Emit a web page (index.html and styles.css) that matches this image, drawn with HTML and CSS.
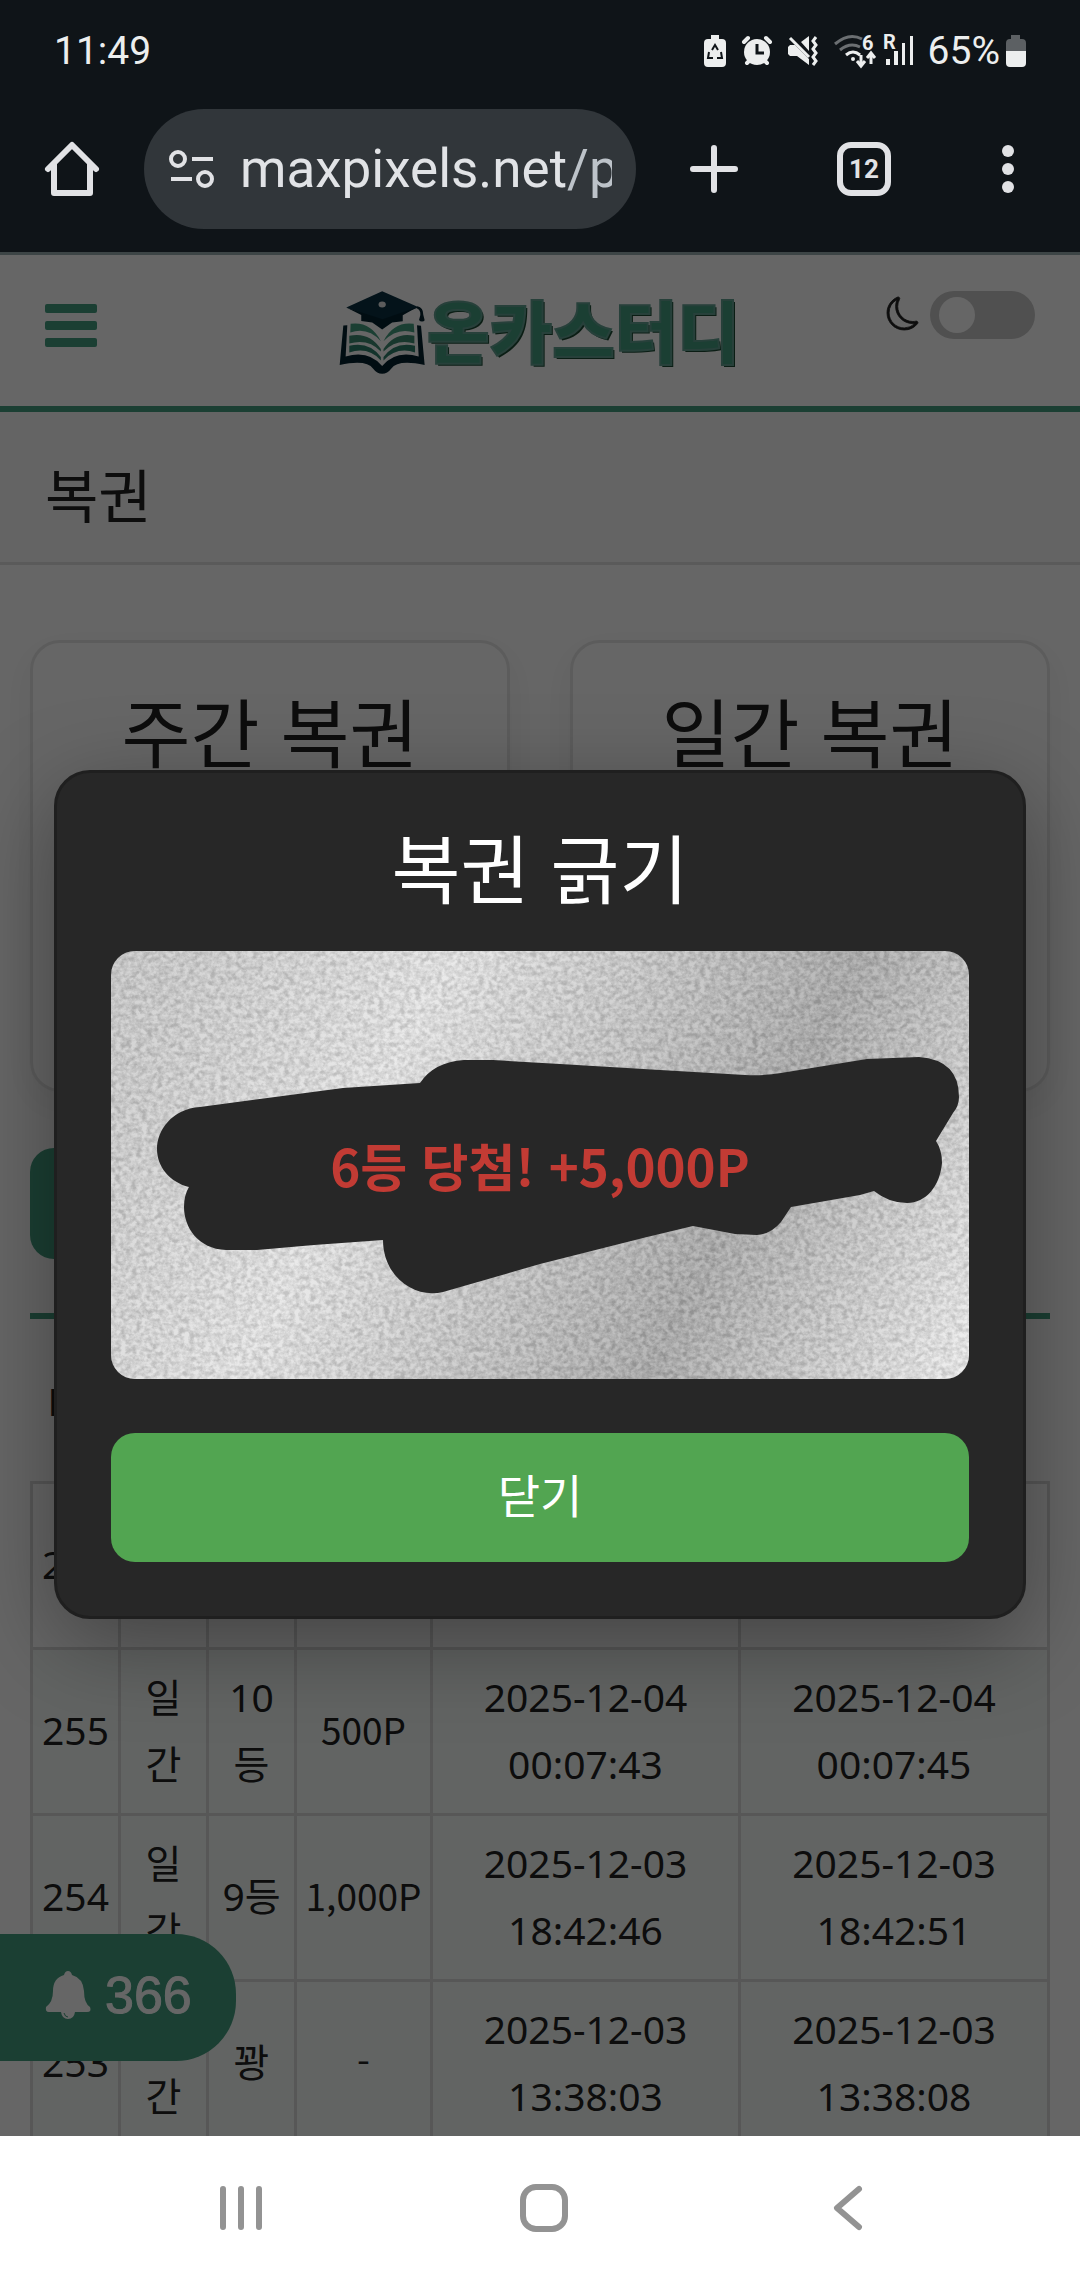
FILE: index.html
```html
<!DOCTYPE html>
<html lang="ko">
<head>
<meta charset="utf-8">
<meta name="viewport" content="width=device-width, initial-scale=1">
<title>복권</title>
<link rel="stylesheet" href="styles.css">
</head>
<body>
<div class="status">
  <span class="status-time">11:49</span>
  <div class="status-icons">
    <svg width="22" height="32" viewBox="0 0 22 32"><path fill="#eceeee" d="M7 0h8v4h3a4 4 0 0 1 4 4v20a4 4 0 0 1-4 4H4a4 4 0 0 1-4-4V8a4 4 0 0 1 4-4h3z"/><path fill="none" stroke="#0f1418" stroke-width="2" d="M8 15l3-5 3 5M5 17l-1 6h5M17 17l1 6h-5"/></svg>
    <svg width="30" height="30" viewBox="0 0 30 30"><circle cx="15" cy="16" r="13" fill="#eceeee"/><path stroke="#eceeee" stroke-width="4" stroke-linecap="round" d="M2 6l4-4M28 6l-4-4M5 27l3-3M25 27l-3-3"/><path fill="none" stroke="#0f1418" stroke-width="3" d="M15 8v9h7"/></svg>
    <svg width="30" height="30" viewBox="0 0 30 30"><path fill="#eceeee" d="M0 11l2-2h5l14 14v6L9 20H2l-2-2zM13 6l8-6v15z"/><path fill="none" stroke="#eceeee" stroke-width="3" d="M2 2l19 19M28 1l-3 4 3 4-3 4 3 4-3 4 3 4-3 4"/></svg>
    <svg class="wifi" width="42" height="32" viewBox="0 0 42 32"><g fill="none" stroke-width="3"><path stroke="#6b6f72" d="M1 9Q15-3 28 4M6 15q10-8 20-3"/><path stroke="#eceeee" d="M12 20q7-6 14 0M27 20v10M23 26l4 5 4-5M37 29V18M33 23l4-5 4 5"/></g><circle cx="19" cy="24" r="2" fill="#eceeee"/><text x="28" y="15" class="tiny">6</text></svg>
    <svg class="signal" width="31" height="32" viewBox="0 0 31 32"><g fill="#eceeee"><rect x="3" y="24" width="4" height="6"/><rect x="11" y="16" width="4" height="14"/><rect x="19" y="8" width="3" height="22"/><rect x="27" y="1" width="3" height="29"/></g><text x="0" y="14" class="tiny">R</text></svg>
    <span class="status-battery">65%<svg width="20" height="32" viewBox="0 0 20 32"><path fill="#5c6063" d="M5 0h9v4h2a4 4 0 0 1 4 4v8H0V8a4 4 0 0 1 4-4h1z"/><path fill="#eceeee" d="M0 16h20v12a4 4 0 0 1-4 4H4a4 4 0 0 1-4-4z"/></svg></span>
  </div>
</div>
<div class="browser">
  <button class="tool" aria-label="Home"><svg width="54" height="54" viewBox="0 0 54 54"><path fill="none" stroke="#e1e2e5" stroke-width="6" stroke-linecap="round" stroke-linejoin="round" d="M3 27L27 3l24 24M9 22v29h36V22"/></svg></button>
  <div class="address">
    <svg width="46" height="38" viewBox="0 0 46 38"><g fill="none" stroke="#e1e2e5" stroke-width="4"><circle cx="9" cy="9" r="7"/><circle cx="36" cy="29" r="7"/><path d="M23 9h21M2 29h21"/></g></svg>
    <span class="url">maxpixels.net<span class="url-path">/p</span></span>
  </div>
  <button class="tool new-tab" aria-label="New tab"><svg width="48" height="48" viewBox="0 0 48 48"><path stroke="#e1e2e5" stroke-width="6" stroke-linecap="round" d="M24 3v42M3 24h42"/></svg></button>
  <button class="tool tabs">12</button>
  <button class="tool" aria-label="Menu"><svg width="12" height="48" viewBox="0 0 12 48"><g fill="#e1e2e5"><circle cx="6" cy="6" r="6"/><circle cx="6" cy="24" r="6"/><circle cx="6" cy="42" r="6"/></g></svg></button>
</div>

<main class="viewport">
  <header class="site-header">
    <button class="menu" aria-label="메뉴"><span></span><span></span><span></span></button>
    <a class="logo" href="#">
      <svg width="85" height="81" viewBox="63 62 256 244">
        <path fill="#0a3042" d="M82 112L190 63l110 48-109 42z"/>
        <path fill="#04222f" d="M82 112l109 35 104-36-43 24v18l-32 4-30 21-30-21-33-5v-18zM296 108q18 3 18 26l4 16q-2 4-8 4t-9-5l4-15q1-15-11-20z"/>
        <ellipse cx="190" cy="103" rx="11" ry="9" fill="#e6e6e6"/>
        <path fill="#04222f" d="M73 166l12-1-5 94q70-20 110 29 40-49 110-29l-5-94 12 2 11 118q-80-18-101 11-11 15-27 15t-27-15q-21-29-101-11z"/>
        <g fill="#449e80"><path d="M95 161q60-8 91 52-40-44-92-26z"/><path d="M285 161q-60-8-91 52 42-43 93-26z"/></g>
        <g fill="#3d8b72"><path d="M91 197q60-13 95 40v7q-38-40-95-24zM287 197q-58-13-93 40v7q40-40 93-24z"/></g>
        <g fill="#2f806b"><path d="M91 227q60-14 95 34v10q-38-42-95-24zM289 227q-60-14-95 34v10q40-42 95-24z"/></g>
      </svg>
      <span class="logo-text">온카스터디</span>
    </a>
    <label class="theme">
      <svg width="33" height="33" viewBox="0 0 16 16" aria-hidden="true"><path fill="#222" stroke="#222" stroke-width=".4" d="M6 .278a.77.77 0 0 1 .08.858 7.2 7.2 0 0 0-.878 3.46c0 4.021 3.278 7.277 7.318 7.277q.792-.001 1.533-.16a.79.79 0 0 1 .81.316.73.73 0 0 1-.031.893A8.35 8.35 0 0 1 8.344 16C3.734 16 0 12.286 0 7.71 0 4.266 2.114 1.312 5.124.06A.75.75 0 0 1 6 .278M4.858 1.311A7.27 7.27 0 0 0 1.025 7.71c0 4.02 3.279 7.276 7.319 7.276a7.32 7.32 0 0 0 5.205-2.162q-.506.063-1.029.063c-4.61 0-8.343-3.714-8.343-8.29 0-1.167.242-2.278.681-3.286"/></svg>
      <input type="checkbox" class="switch" aria-label="다크 모드">
    </label>
  </header>
  <h1 class="page-title">복권</h1>

  <div class="content">
    <div class="cards">
      <section class="card"><h2>주간 복권</h2></section>
      <section class="card"><h2>일간 복권</h2></section>
    </div>
    <button class="filter" aria-label="복권"></button>
    <table class="history">
      <colgroup><col class="c-narrow"><col class="c-narrow"><col class="c-narrow"><col class="c-points"><col class="c-date"><col></colgroup>
      <thead><tr><th>No</th><th></th><th></th><th></th><th></th><th></th></tr></thead>
      <tbody>
        <tr><td>256</td><td></td><td></td><td></td><td></td><td></td></tr>
        <tr><td>255</td><td>일<br>간</td><td>10<br>등</td><td class="points">500P</td><td>2025-12-04<br>00:07:43</td><td>2025-12-04<br>00:07:45</td></tr>
        <tr><td>254</td><td>일<br>간</td><td>9등</td><td class="points">1,000P</td><td>2025-12-03<br>18:42:46</td><td>2025-12-03<br>18:42:51</td></tr>
        <tr><td>253</td><td>일<br>간</td><td>꽝</td><td class="points">-</td><td>2025-12-03<br>13:38:03</td><td>2025-12-03<br>13:38:08</td></tr>
      </tbody>
    </table>
  </div>

  <button class="alerts">
    <svg width="45" height="48" viewBox="0 0 45 48"><path fill="#fff" d="M22 0q3 0 4 4 11 3 12 16 0 12 6 16 2 5-3 5H3q-4 0-3-5 7-5 7-16Q7 7 18 4q1-4 4-4zM15 41h14q-1 7-7 7t-7-7z"/><path fill="none" stroke="#449e80" stroke-width="1" d="M18 42q1 4 4 4"/></svg>
    366
  </button>

  <div class="overlay">
    <div class="modal" role="dialog" aria-labelledby="modal-title">
      <h2 id="modal-title">복권 긁기</h2>
      <div class="scratch">
        <svg viewBox="111 951 858 428" preserveAspectRatio="none" aria-hidden="true">
          <defs>
            <linearGradient id="silver" gradientUnits="userSpaceOnUse" x1="111" y1="951" x2="969" y2="1379">
              <stop offset="0" stop-color="#cacaca"/><stop offset=".08" stop-color="#cecece"/><stop offset=".32" stop-color="#e6e6e6"/><stop offset=".7" stop-color="#aaaaaa"/><stop offset="1" stop-color="#f0f0f0"/>
            </linearGradient>
            <filter id="grain" x="0" y="0" width="100%" height="100%" color-interpolation-filters="sRGB">
              <feTurbulence type="fractalNoise" baseFrequency=".19 .21" numOctaves="3" seed="4"/>
              <feColorMatrix values="1.5 1.5 0 0 -.9  1.5 1.5 0 0 -.9  1.5 1.5 0 0 -.9  0 0 0 0 .15"/>
            </filter>
          </defs>
          <rect x="111" y="951" width="858" height="428" fill="url(#silver)"/>
          <rect x="111" y="951" width="858" height="428" filter="url(#grain)"/>
          <path fill="#272727" d="M200 1107L275 1097 343 1088 420 1083Q434 1062 464 1060L493 1060 560 1064 660 1070 745 1075Q765 1076 781 1073L867 1059 919 1057Q959 1060 959 1097 959 1106 953 1113L936 1141Q942 1150 942 1163C940 1186 926 1203 907 1203Q889 1203 874 1191L860 1195 791 1207 781 1222Q771 1234 757 1235L735 1234 693 1226 647 1237 540 1264 443 1292C414 1299 383 1276 383 1240L314 1245 257 1250 226 1250C198 1249 184 1227 184 1207Q184 1195 189 1187C169 1182 157 1166 157 1149C157 1130 172 1109 200 1107Z"/>
        </svg>
        <p class="prize">6등 당첨! +5,000P</p>
      </div>
      <button class="close">닫기</button>
    </div>
  </div>
</main>

<nav class="system-nav">
  <button class="tool" aria-label="Recents"><svg width="48" height="48" viewBox="0 0 48 48"><path stroke="#939393" stroke-width="6" stroke-linecap="round" d="M6 5v38M24 5v38M42 5v38"/></svg></button>
  <button class="tool" aria-label="Home"><svg width="48" height="48" viewBox="0 0 48 48"><rect x="3" y="3" width="42" height="42" rx="13" fill="none" stroke="#939393" stroke-width="6"/></svg></button>
  <button class="tool" aria-label="Back"><svg width="48" height="48" viewBox="0 0 48 48"><path fill="none" stroke="#939393" stroke-width="6" stroke-linecap="round" stroke-linejoin="round" d="M36 5L14 24l22 19"/></svg></button>
</nav>
</body>
</html>
```
FILE: styles.css
```css
* { box-sizing: border-box; }
body {
  margin: 0;
  height: 100vh;
  display: flex;
  flex-direction: column;
  background: #fff;
  color: #222;
  font-family: "Noto Sans", "Noto Sans CJK KR", sans-serif;
}
h1, h2, p { margin: 0; font-weight: 400; }
button { border: 0; padding: 0; background: none; font: inherit; color: inherit; }
svg { display: block; flex: none; overflow: visible; }

/* Phone status bar */
.status {
  display: flex;
  justify-content: space-between;
  align-items: center;
  height: 102px;
  padding: 0 54px;
  background: #0f1418;
  color: #eceeee;
  font: 39px/48px Roboto, sans-serif;
}
.status-icons { display: flex; align-items: center; gap: 16px; }
.wifi { margin-right: -9px; }
.signal { margin-right: -2px; }
.tiny { font: 700 20px Roboto, sans-serif; fill: #eceeee; }
.status-battery { display: flex; align-items: center; gap: 6px; }

/* Browser toolbar */
.browser {
  display: flex;
  align-items: center;
  height: 153px;
  padding: 7px 66px 23px 45px;
  border-bottom: 3px solid #3d4546;
  background: #0f1418;
}
.tool { display: grid; place-items: center; }
.address {
  flex: 1;
  display: flex;
  align-items: center;
  gap: 25px;
  height: 120px;
  margin-left: 45px;
  padding: 0 24px 0 25px;
  border-radius: 60px;
  background: #31363a;
  color: #e1e3e6;
}
.url { flex: 1; width: 0; overflow: hidden; white-space: nowrap; font: 53px/70px Roboto, sans-serif; }
.url-path { color: #bdc3c9; }
.new-tab { margin: 0 99px 0 54px; }
.tabs {
  width: 54px;
  height: 54px;
  margin-right: 111px;
  border: 6px solid #e1e2e5;
  border-radius: 14px;
  color: #e1e2e5;
  font: 700 26px/42px Roboto, sans-serif;
}

/* Site */
.viewport { position: relative; flex: 1; min-height: 0; overflow: hidden; }
.site-header {
  display: grid;
  grid-template-columns: 1fr auto 1fr;
  align-items: start;
  padding: 36px 45px 34px;
  border-bottom: 6px solid #449e80;
}
.menu { display: grid; gap: 8px; width: 52px; margin-top: 13px; }
.menu span { height: 9px; border-radius: 2px; background: #449e80; }
.logo { display: flex; gap: 2px; color: #449e80; text-decoration: none; }
.logo-text {
  font: 900 68px/76px "Noto Sans CJK KR", sans-serif;
  -webkit-text-stroke: 2px #62a092;
  text-shadow: 2px 2px 0 #1c4a34;
}
.theme { display: flex; justify-self: end; align-items: center; gap: 10px; }
.theme svg { margin-bottom: 3px; }
.switch {
  appearance: none;
  width: 105px;
  height: 48px;
  margin: 0;
  padding: 6px 9px;
  border-radius: 24px;
  background: #c8c8c8;
}
.switch::before { content: ""; display: block; width: 36px; height: 36px; border-radius: 50%; background: #fff; }
.switch:checked { padding-left: 60px; background: #449e80; }
.page-title {
  padding: 40px 45px 28px;
  border-bottom: 3px solid #e1e1e1;
  background: #fafafa;
  font: 400 58px/82px "Noto Sans CJK KR", sans-serif;
}
.content { padding: 75px 30px 0; }
.cards { display: grid; grid-template-columns: 1fr 1fr; gap: 60px; }
.card {
  min-height: 452px;
  padding: 45px 30px;
  border: 3px solid #e6e6e6;
  border-radius: 30px;
  box-shadow: 0 12px 36px rgba(0, 0, 0, .06);
}
.card h2 { text-align: center; font: 400 75px/84px "Noto Sans CJK KR", sans-serif; }
.filter { display: block; width: 50%; height: 111px; margin: 56px 0 54px; border-radius: 24px; background: #449e80; }

.history {
  width: 100%;
  table-layout: fixed;
  border-spacing: 0;
  font-size: 39px;
  line-height: 67px;
  text-align: center;
}
.c-narrow { width: 88px; }
.c-points { width: 136px; }
.c-date { width: 308px; }
.history th { height: 168px; padding: 0; border-top: 6px solid #449e80; font-weight: 400; }
.history td { height: 166px; padding: 0 0 4px; border: solid #d9d9d9; border-width: 3px 0 0 3px; white-space: nowrap; }
.history td:last-child { border-right-width: 3px; }
.history tr + tr td { background: #f5faf8; }
.history .points { font-family: "Noto Sans CJK KR", sans-serif; font-size: 37px; }

.alerts {
  position: absolute;
  left: 0;
  bottom: 75px;
  display: flex;
  align-items: center;
  gap: 14px;
  height: 127px;
  padding: 0 44px 6px 46px;
  border-radius: 0 60px 60px 0;
  background: #449e80;
  color: #fff;
  font: 400 52px/60px "Liberation Sans", sans-serif;
  -webkit-text-stroke: 1px #fff;
}

/* Scratch dialog */
.overlay {
  position: absolute;
  inset: 0;
  display: grid;
  place-items: center;
  padding-bottom: 2px;
  background: rgba(0, 0, 0, .6);
}
.modal {
  display: grid;
  width: 90%;
  padding: 54px;
  border: 3px solid #1f1f1f;
  border-radius: 36px;
  background: #272727;
  box-shadow: 0 24px 90px rgba(0, 0, 0, .35);
  color: #fff;
}
.modal h2 { margin-bottom: 46px; text-align: center; font: 400 75px/78px "Noto Sans CJK KR", sans-serif; }
.scratch { display: grid; height: 428px; overflow: hidden; border-radius: 24px; }
.scratch > * { grid-area: 1 / 1; }
.scratch svg { width: 100%; height: 100%; }
.prize {
  place-self: center;
  color: #c23b34;
  font: 700 51px/60px "Noto Sans CJK KR", sans-serif;
}
.close {
  height: 129px;
  margin-top: 54px;
  padding-bottom: 10px;
  border-radius: 24px;
  background: #52a551;
  font: 400 46px/60px "Noto Sans CJK KR", sans-serif;
}

.system-nav {
  display: grid;
  grid-template-columns: repeat(3, 1fr);
  height: 144px;
  padding: 0 82px 0 90px;
  background: #fff;
}
```
